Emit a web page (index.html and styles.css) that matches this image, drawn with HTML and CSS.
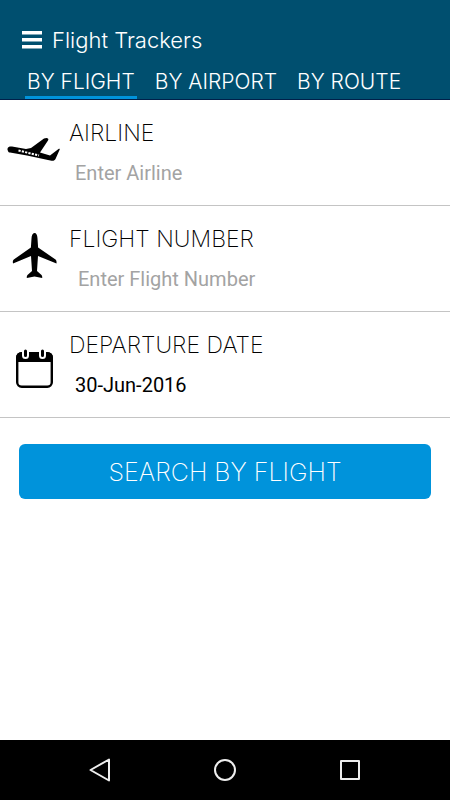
FILE: index.html
```html
<!DOCTYPE html>
<html lang="en">
<head>
<meta charset="utf-8">
<meta name="viewport" content="width=device-width, initial-scale=1">
<title>Flight Trackers</title>
<link rel="stylesheet" href="styles.css">
</head>
<body>
<header class="header">
  <div class="title-bar">
    <button class="menu" type="button" aria-label="Menu">
      <svg width="20" height="18" viewBox="0 0 20 18" fill="#fff"><path d="M0 0h20v3.500H0zM0 7h20v3.500H0zM0 14h20v3.500H0z"/></svg>
    </button>
    <h1 class="title">Flight Trackers</h1>
  </div>
  <nav class="tabs">
    <a class="tab tab-active" href="#flight">BY FLIGHT</a>
    <a class="tab" href="#airport">BY AIRPORT</a>
    <a class="tab" href="#route">BY ROUTE</a>
  </nav>
</header>
<main class="main">
  <form class="form">
    <div class="row">
      <svg class="icon" width="69" height="52" viewBox="0 0 69 52" aria-hidden="true">
        <path d="M8 24c-1.500-3 .5-5 4-4.500l14 2.500 5-1L44 11.500c2.500-1.300 5.500-.5 4 2L40 25.500l10 3 8.500-6.500c1-.8 1.700-.2 1 1l-4 9c-.8 1.500-2 2-4 1.700L27 28.500 10 25.500c-1 0-1.700-.5-2-1.500z"/>
        <path d="M18.500 23.500l20.500 5" stroke="#fff" stroke-width="2" stroke-dasharray="2.200 1.200" fill="none"/>
      </svg>
      <div class="field">
        <label class="label" for="airline">AIRLINE</label>
        <input class="input" id="airline" type="text" placeholder="Enter Airline">
      </div>
    </div>
    <div class="row">
      <svg class="icon" width="69" height="52" viewBox="0 0 69 52" aria-hidden="true">
        <path d="M34.500 0c2 0 2.900 2.500 3 5.500l.6 9 17.400 12c1 .8 1.200 2 1 4L38 23l-1 15 4.500 4c.7.700.8 1.600.7 3l-7.700-1.500-7.700 1.500c-.1-1.400 0-2.300.7-3L32 38l-1-15-18 7.500c-.4-2-.2-3.200.8-4L30.900 14.500l.6-9c.1-3 1-5.500 3-5.500z"/>
      </svg>
      <div class="field">
        <label class="label" for="number">FLIGHT NUMBER</label>
        <input class="input input-wide" id="number" type="text" placeholder="Enter Flight Number">
      </div>
    </div>
    <div class="row">
      <svg class="icon" width="69" height="52" viewBox="0 0 69 52" aria-hidden="true">
        <rect x="17.200" y="14.200" width="34.600" height="33.600" rx="4.500" fill="none" stroke="#000" stroke-width="2.400"/>
        <path d="M16 23v-4q0-6 6-6h25q6 0 6 6v4z"/>
        <path d="M25.500 12v4.500M42.500 12v4.500" stroke="#fff" stroke-width="7" stroke-linecap="round"/>
        <path d="M25.500 12v4.500M42.500 12v4.500" stroke="#000" stroke-width="3" stroke-linecap="round"/>
      </svg>
      <div class="field">
        <label class="label" for="date">DEPARTURE DATE</label>
        <input class="input" id="date" type="text" value="30-Jun-2016">
      </div>
    </div>
    <button class="search" type="button">SEARCH BY FLIGHT</button>
  </form>
</main>
<footer class="system-bar">
  <button class="system-button" type="button" aria-label="Back">
    <svg width="24" height="24" viewBox="0 0 24 24"><path d="M21 1.500v21L2.500 12z"/></svg>
  </button>
  <button class="system-button" type="button" aria-label="Home">
    <svg width="24" height="24" viewBox="0 0 24 24"><circle cx="12" cy="12" r="10"/></svg>
  </button>
  <button class="system-button" type="button" aria-label="Recent apps">
    <svg width="24" height="24" viewBox="0 0 24 24"><rect x="3" y="3" width="18" height="18"/></svg>
  </button>
</footer>
</body>
</html>
```
FILE: styles.css
```css
* {
  box-sizing: border-box;
}

body {
  margin: 0;
  min-height: 100vh;
  display: flex;
  flex-direction: column;
  background: #fff;
  color: #000;
  font-family: Inter, "Liberation Sans", sans-serif;
  font-weight: 300;
}

button {
  border: 0;
  padding: 0;
  background: none;
  font: inherit;
}

.header {
  padding-top: 24px;
  background: #004f6f;
  border-bottom: 1px solid #00204a;
  color: #fff;
}

.title-bar {
  display: flex;
  align-items: center;
  gap: 10px;
  height: 32px;
  padding-left: 22px;
}

.menu {
  display: flex;
}

.title {
  margin: 0;
  font-size: 22px;
  line-height: 32px;
  font-weight: 300;
}

.tabs {
  display: flex;
  gap: 16px;
  padding: 12px 25px 0;
}

.tab {
  padding: 0 2px;
  border-bottom: 3px solid transparent;
  color: #fff;
  font-size: 21px;
  line-height: 28px;
  text-decoration: none;
  white-space: nowrap;
}

.tab-active {
  border-bottom-color: #0093db;
}

.main {
  flex: 1;
}

.row {
  display: flex;
  height: 106px;
  padding-top: 19px;
  border-bottom: 1px solid #c4c4c4;
}

.icon {
  flex: none;
  margin-top: 8px;
}

.field {
  flex: 1;
  display: flex;
  flex-direction: column;
  gap: 12px;
}

.label {
  font-size: 23px;
  line-height: 28px;
  font-weight: 200;
}

.input {
  width: 100%;
  height: 28px;
  border: 0;
  padding: 0 6px;
  outline: 0;
  background: none;
  color: #000;
  font: 400 20px Roboto, sans-serif;
}

.input-wide {
  padding-left: 9px;
}

.input::placeholder {
  color: #a3a3a3;
  opacity: 1;
}

.search {
  display: block;
  width: calc(100% - 38px);
  height: 55px;
  margin: 26px 19px;
  border-radius: 6px;
  background: #0093db;
  color: #fff;
  font-size: 25px;
  font-weight: 200;
}

.system-bar {
  display: flex;
  justify-content: center;
  gap: 101px;
  height: 60px;
  background: #000;
}

.system-button {
  display: flex;
  align-items: center;
}

.system-button svg {
  fill: none;
  stroke: #eee;
  stroke-width: 2;
  stroke-linejoin: round;
}
```
